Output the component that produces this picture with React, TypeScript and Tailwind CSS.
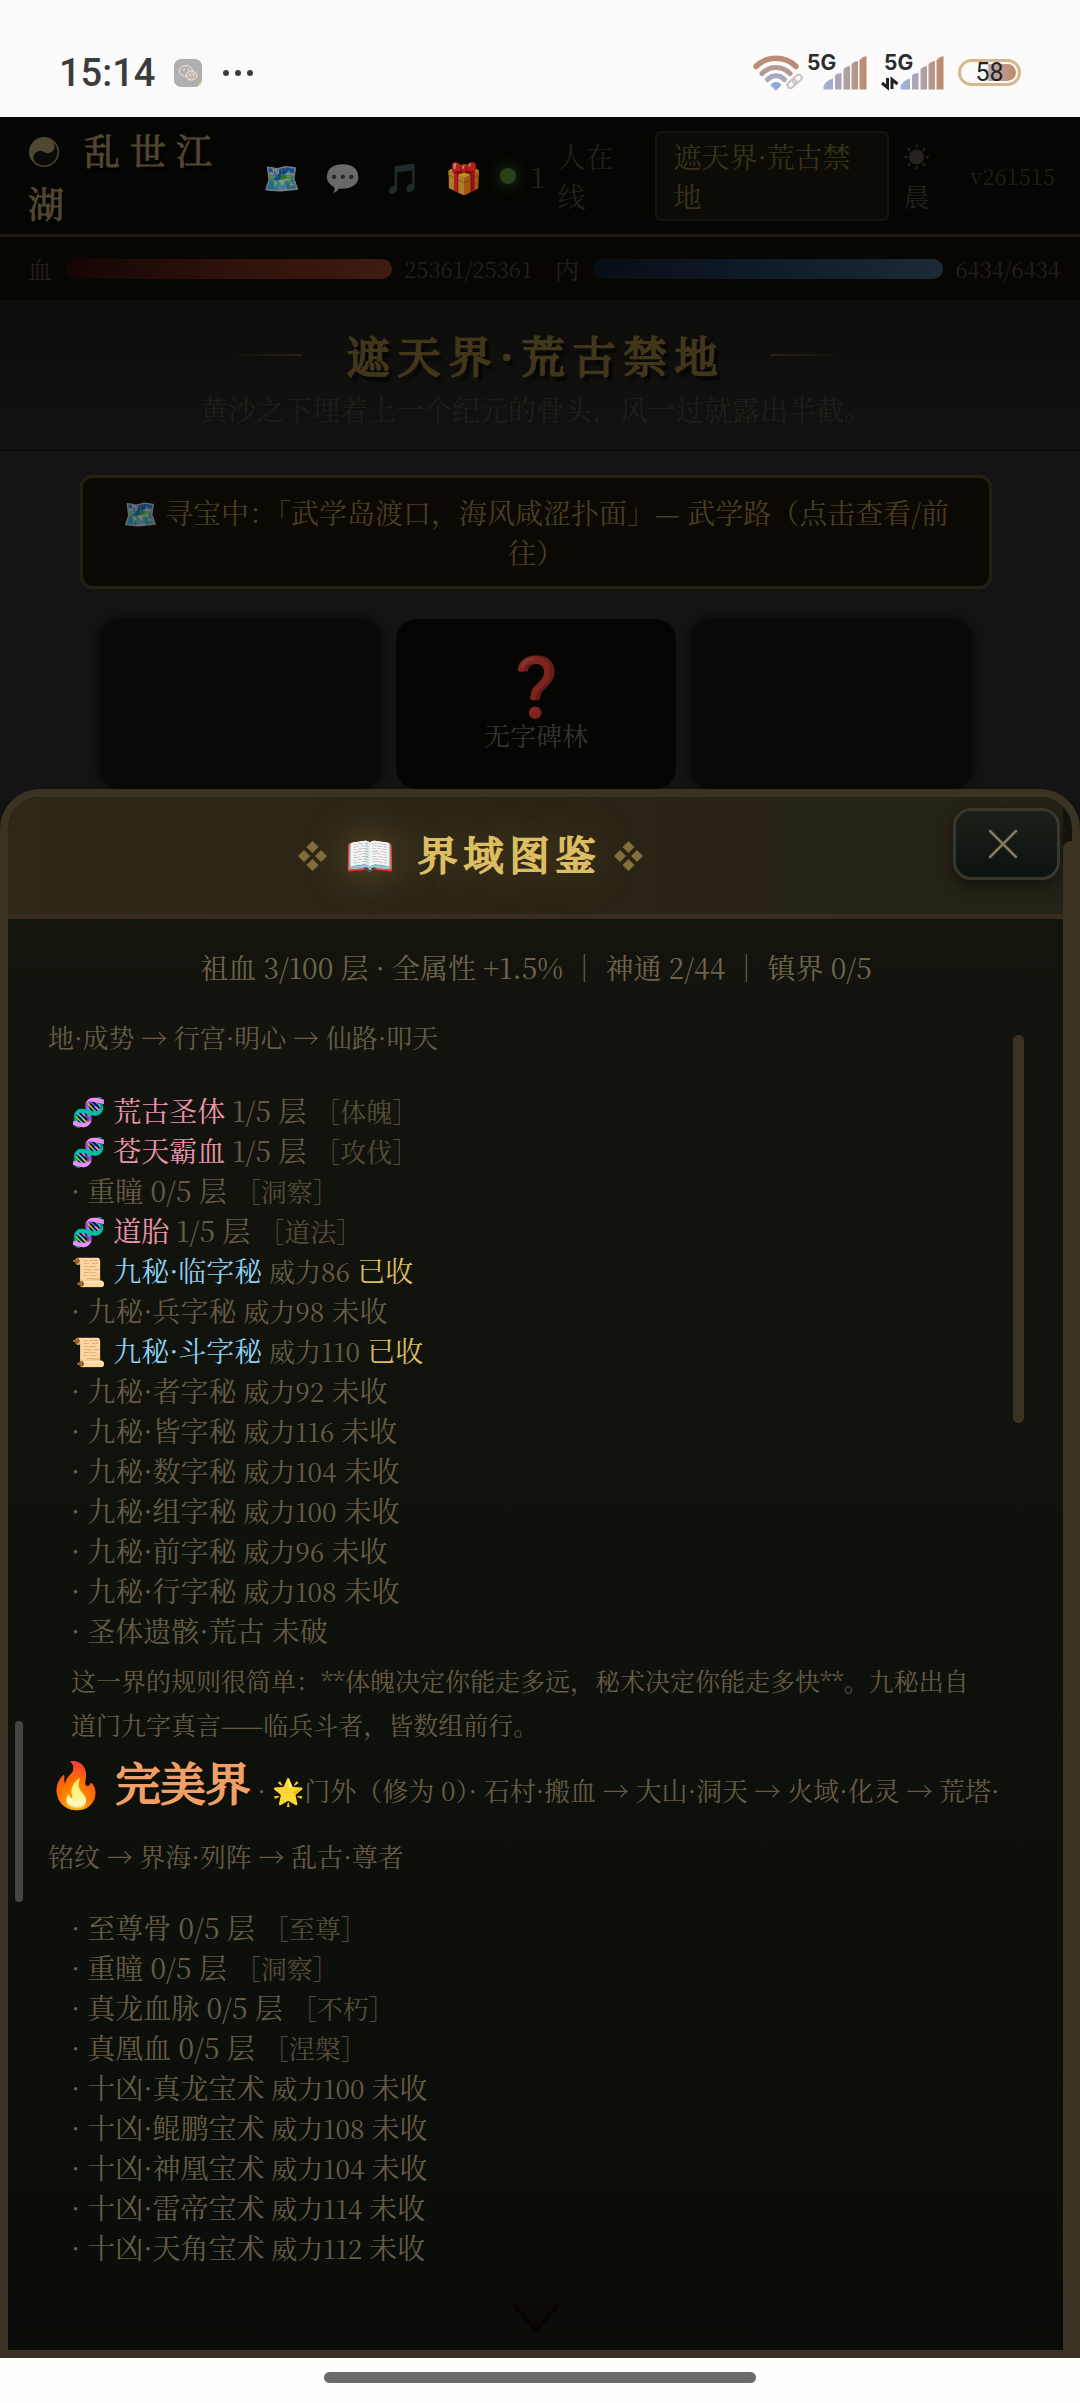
import React from "react";

type Row = {
  icon?: string;
  name: string;
  tone?: "pink" | "blue";
  count?: string;
  tag?: string;
  power?: string;
  state?: string;
  owned?: boolean;
};

const covering: Row[] = [
  { icon: "🧬", name: "荒古圣体", tone: "pink", count: "1/5 层", tag: "体魄" },
  { icon: "🧬", name: "苍天霸血", tone: "pink", count: "1/5 层", tag: "攻伐" },
  { name: "重瞳", count: "0/5 层", tag: "洞察" },
  { icon: "🧬", name: "道胎", tone: "pink", count: "1/5 层", tag: "道法" },
  { icon: "📜", name: "九秘·临字秘", tone: "blue", power: "威力86", state: "已收", owned: true },
  { name: "九秘·兵字秘", power: "威力98", state: "未收" },
  { icon: "📜", name: "九秘·斗字秘", tone: "blue", power: "威力110", state: "已收", owned: true },
  { name: "九秘·者字秘", power: "威力92", state: "未收" },
  { name: "九秘·皆字秘", power: "威力116", state: "未收" },
  { name: "九秘·数字秘", power: "威力104", state: "未收" },
  { name: "九秘·组字秘", power: "威力100", state: "未收" },
  { name: "九秘·前字秘", power: "威力96", state: "未收" },
  { name: "九秘·行字秘", power: "威力108", state: "未收" },
  { name: "圣体遗骸·荒古", state: "未破" },
];

const perfect: Row[] = [
  { name: "至尊骨", count: "0/5 层", tag: "至尊" },
  { name: "重瞳", count: "0/5 层", tag: "洞察" },
  { name: "真龙血脉", count: "0/5 层", tag: "不朽" },
  { name: "真凰血", count: "0/5 层", tag: "涅槃" },
  { name: "十凶·真龙宝术", power: "威力100", state: "未收" },
  { name: "十凶·鲲鹏宝术", power: "威力108", state: "未收" },
  { name: "十凶·神凰宝术", power: "威力104", state: "未收" },
  { name: "十凶·雷帝宝术", power: "威力114", state: "未收" },
  { name: "十凶·天角宝术", power: "威力112", state: "未收" },
];

function RowList({ rows }: { rows: Row[] }) {
  return (
    <ul className="pl-[23px] text-[28px] leading-10 whitespace-nowrap text-[#665c46]">
      {rows.map((r) => (
        <li key={r.name} className="h-10">
          {r.icon ?? "·"}{" "}
          <span
            className={
              r.tone === "pink" ? "text-[#ee95ae]" : r.tone === "blue" ? "text-[#8fd0f5]" : ""
            }
          >
            {r.name}
          </span>
          {r.count && " " + r.count}
          {r.tag && <span className="ml-2 text-[26px] text-[#554d39]">［{r.tag}］</span>}
          {r.power && <span className="text-[26px]"> {r.power}</span>}
          {r.state && <span className={r.owned ? "text-[#d9bd62]" : ""}> {r.state}</span>}
        </li>
      ))}
    </ul>
  );
}

function Wifi() {
  return (
    <svg width="52" height="36" viewBox="0 0 52 36" fill="none" strokeLinecap="round" aria-label="Wi-Fi">
      <path d="M3 11.5C14 .5 32 .5 43 11.5" stroke="#bd8c72" strokeWidth="5.5" />
      <path d="M9 18.5C17 10.500 29 10.500 37 18.500" stroke="#b59a94" strokeWidth="5" />
      <path d="M14.500 24.500C19.500 19.500 26.500 19.500 31.500 24.500" stroke="#a9acbd" strokeWidth="5" />
      <path d="M18 30C20 26.500 26 26.500 28 30L23 35Z" fill="#8fa9dc" stroke="#8fa9dc" strokeWidth="1" />
      <g stroke="#cfc0c0" strokeWidth="2" transform="rotate(-42 42 26)">
        <rect x="33" y="23" width="10" height="6" rx="3" />
        <rect x="40" y="23" width="10" height="6" rx="3" />
      </g>
    </svg>
  );
}

function Signal({ id, arrows }: { id: string; arrows?: boolean }) {
  return (
    <span className="relative block h-9 w-[62px]">
      <span className="absolute -top-1 left-0 font-[Inter,sans-serif] text-[21px] leading-6 font-bold text-[#2c2c2c]">
        5G
      </span>
      <svg className="absolute inset-0 overflow-visible" width="62" height="36" viewBox="0 0 62 36" aria-label="信号">
        <defs>
          <linearGradient id={id} gradientUnits="userSpaceOnUse" x1="16" x2="60" y1="0" y2="0">
            <stop offset="0" stopColor="#9db4e2" />
            <stop offset=".5" stopColor="#b0a0a4" />
            <stop offset="1" stopColor="#be8a6c" />
          </linearGradient>
        </defs>
        <path
          fill={`url(#${id})`}
          d="M16.500 34.500v-3q2-6 9.500-8v11z M28 34.500V20q3-2 6.500-2v16.500z M36.500 34.500V14q3-3 6.500-3v23.500z M44.500 34.500V9q3-3 6.500-3v28.500z M52.500 34.500V5q3-3.500 7-4v33.500z"
        />
        {arrows && (
          <path
            d="M3.500 23v9.500L-2 28M8 34v-9.500l5.500 4.500"
            fill="none"
            stroke="#222"
            strokeWidth="3"
          />
        )}
      </svg>
    </span>
  );
}

function StatusBar() {
  return (
    <header className="flex h-[117px] items-center bg-[#fbfbfb] px-[59px] pt-7 font-[Inter,sans-serif] text-[#3c3c3c]">
      <span className="font-[Roboto,sans-serif] text-[38px] leading-10 font-medium">15:14</span>
      <svg className="ml-[18px]" width="30" height="30" viewBox="0 0 30 30" aria-label="微信">
        <rect x="1" y="1" width="28" height="28" rx="7" fill="#afafaf" />
        <ellipse cx="13" cy="13" rx="6.500" ry="5.500" fill="#b9b2ac" stroke="#f0e6dd" />
        <ellipse cx="18.500" cy="17.500" rx="5.500" ry="4.500" fill="#c4bbb3" stroke="#f0e6dd" />
        <path d="M10.500 11.500h1M15 11.500h1M16.500 16.500h1M20 16.500h1" stroke="#fff" strokeWidth="1.500" />
        <path d="M25 28l4-5v2q0 3-4 3" fill="#f4ddb0" />
      </svg>
      <span className="ml-5 flex gap-1.5" aria-label="更多">
        <i className="size-1.5 rounded-full bg-[#3c3c3c]" />
        <i className="size-1.5 rounded-full bg-[#3c3c3c]" />
        <i className="size-1.5 rounded-full bg-[#3c3c3c]" />
      </span>
      <span className="ml-auto flex items-center">
        <Wifi />
        <span className="ml-0.5">
          <Signal id="sig-a" />
        </span>
        <span className="ml-[15px]">
          <Signal id="sig-b" arrows />
        </span>
        <span className="ml-3 flex h-[27px] w-[63px] items-center rounded-full border-[3px] border-[#d6b88c] p-[2px]">
          <span className="flex h-full w-full items-center justify-center rounded-full bg-linear-to-r from-transparent from-45% via-[#b8a6a8] via-50% to-[#c08a68] font-[Roboto,sans-serif] text-[25px] leading-none text-[#222]">
            58
          </span>
        </span>
      </span>
    </header>
  );
}

function Taiji() {
  return (
    <svg className="mr-6 inline-block align-[-3px]" width="32" height="32" viewBox="0 0 32 32" aria-hidden="true">
      <circle cx="16" cy="16" r="15" fill="#4f4730" />
      <path
        d="M16 2.500a13.500 13.500 0 0 1 0 27 6.750 6.750 0 0 1 0-13.500 6.750 6.750 0 0 0 0-13.500"
        fill="#0a0a08"
        transform="rotate(35 16 16)"
      />
    </svg>
  );
}

function Meter({ label, value, red }: { label: string; value: string; red?: boolean }) {
  return (
    <div className="flex flex-1 items-center text-[22px] text-[#23211c]">
      <span className="text-2xl">{label}</span>
      <span
        className={
          red
            ? "ml-[14px] h-5 flex-1 rounded-full bg-linear-to-r from-[#140604] via-[#30110c] to-[#3f1b12]"
            : "ml-[14px] h-5 flex-1 rounded-full bg-linear-to-r from-[#070d15] via-[#101c2a] to-[#1d2936]"
        }
      />
      <span className="ml-3">{value}</span>
    </div>
  );
}

function Game() {
  return (
    <div className="col-start-1 row-start-1 bg-[#131313]">
      <div className="flex h-[120px] items-center border-b-[3px] border-[#1b1713] bg-[#050503] pr-[25px] pl-7">
        <h1 className="w-[235px] text-[36px] leading-[53px] font-normal tracking-[10px] text-[#50472e] [-webkit-text-stroke:1px_#50472e] [text-shadow:3px_4px_3px_#000]">
          <Taiji />
          乱世江
          <br />湖
        </h1>
        <nav className="flex w-[219px] justify-between text-[30px] leading-10">
          <button className="opacity-60" aria-label="地图">🗺️</button>
          <button className="opacity-40" aria-label="聊天">💬</button>
          <button className="opacity-35" aria-label="音乐">🎵</button>
          <button className="opacity-70" aria-label="礼物">🎁</button>
        </nav>
        <span className="ml-[18px] size-4 rounded-full bg-[#29421b] shadow-[0_0_12px_4px_#12200b]" />
        <span className="ml-[14px] text-[28px] text-[#25231d]">1</span>
        <span className="ml-3 w-[72px] text-[28px] leading-10 text-[#22201b]">
          人在
          <br />线
        </span>
        <button className="ml-[26px] w-[234px] shrink-0 rounded-md border-2 border-[#15140c] bg-[#0d0b06] px-4 py-[3px] text-left text-[28px] leading-10 text-[#3b321a]">
          遮天界·荒古禁地
        </button>
        <span className="ml-[14px] w-7 text-[26px] leading-10 text-[#25231e]">☀ 晨</span>
        <span className="ml-auto text-[22px] text-[#201e1a]">v261515</span>
      </div>

      <div className="flex h-16 items-center gap-[22px] border-b border-[#0e0d09] bg-[#070603] pr-5 pl-7">
        <Meter label="血" value="25361/25361" red />
        <Meter label="内" value="6434/6434" />
      </div>

      <div className="flex h-[150px] flex-col items-center border-b-2 border-[#0a0a0a] bg-linear-to-b from-[#0d0c0a] to-[#121212] pt-[22px] pr-2">
        <div className="flex items-center gap-11">
          <i className="h-0.5 w-[74px] bg-linear-to-r from-transparent to-[#29230f]" />
          <h2 className="text-[43px] leading-[64px] font-normal tracking-[8px] text-[#41361a] [-webkit-text-stroke:2px_#41361a] [text-shadow:4px_5px_3px_#000]">
            遮天界·荒古禁地
          </h2>
          <i className="h-0.5 w-[74px] bg-linear-to-l from-transparent to-[#29230f]" />
        </div>
        <p className="text-[28px] leading-[44px] text-[#201e1a]">
          黄沙之下埋着上一个纪元的骨头，风一过就露出半截。
        </p>
      </div>

      <div className="pr-2">
        <button className="mx-auto mt-6 block w-[85%] rounded-xl border-[3px] border-[#262010] bg-[#0c0803] px-6 py-[14px] text-[28px] leading-10 text-[#4a3e22]">
          <span className="opacity-50">🗺️</span> 寻宝中：「武学岛渡口，海风咸涩扑面」— 武学路（点击查看/前
          <br />
          往）
        </button>

        <div className="mx-[100px] mt-[30px] grid grid-cols-3 gap-[15px]">
          <div className="h-[170px] rounded-[20px] bg-[#090909] shadow-[0_0_6px_2px_#0c0c0c]" />
          <button className="flex h-[170px] flex-col items-center rounded-[20px] bg-[#050504] pt-[29px] text-[#38352d]">
            <span className="text-[58px] leading-[68px] opacity-50">❓</span>
            <span className="text-[26px] leading-[38px]">无字碑林</span>
          </button>
          <div className="h-[170px] rounded-[20px] bg-[#090909] shadow-[0_0_6px_2px_#0c0c0c]" />
        </div>
      </div>
    </div>
  );
}

function Knot() {
  return (
    <svg width="29" height="30" viewBox="0 0 29 30" fill="#81703a" aria-hidden="true">
      <path d="M14.500 0l6 6-6 6-6-6zM14.500 18l6 6-6 6-6-6zM6 9l6 6-6 6-6-6zM23 9l6 6-6 6-6-6z" />
    </svg>
  );
}

function Codex() {
  return (
    <section
      role="dialog"
      aria-label="界域图鉴"
      className="relative z-10 col-start-1 row-start-1 mt-[672px] overflow-hidden rounded-t-[40px] border-8 border-[#3a3323] bg-linear-to-b from-[#14140d] via-[#0f120b] to-[#0a0c09]"
    >
      <div className="mr-[9px] flex h-[122px] items-center justify-center border-b-[5px] border-[#382c20] bg-linear-to-r from-[#2f281a] via-[#2b2417] to-[#252217] pr-[130px]">
        <h2 className="flex items-center text-[40px] leading-[60px] font-normal tracking-[6px] text-[#dcbd62] [-webkit-text-stroke:2px_#dcbd62] [text-shadow:0_0_40px_#6a5c26]">
          <Knot />
          <span className="mr-3 ml-[18px] pb-[5px]">📖 界域图鉴</span>
          <Knot />
        </h2>
        <button
          aria-label="关闭"
          className="absolute top-[11px] right-3 flex h-[72px] w-[107px] items-center justify-center rounded-[18px] border-[3px] border-[#39362a] bg-linear-to-b from-[#1b1f1a] to-[#0c1310] pr-2 shadow-[0_6px_16px_#15130c]"
        >
          <svg width="30" height="30" viewBox="0 0 30 30" stroke="#82795f" strokeWidth="2.500" strokeLinecap="round">
            <path d="M2 2l26 26M28 2L2 28" />
          </svg>
        </button>
      </div>
      <div className="absolute top-11 right-0 bottom-0 w-[9px] rounded-tl-lg bg-[#3a3323]" />
      <div className="absolute top-[924px] left-[7px] h-[181px] w-2 rounded-full bg-[#454643]" />
      <div className="absolute top-[238px] right-12 h-[388px] w-[11px] rounded-full bg-[#3a3323]" />

      <p className="pt-7 pr-2 text-center text-[28px] leading-10 text-[#6f644d]">
        祖血 3/100 层 · 全属性 +1.5% ｜ 神通 2/44 ｜ 镇界 0/5
      </p>
      <div className="mt-[14px] pr-16 pl-10 text-[#665c46]">
        <p className="text-[26px] leading-[72px]">地·成势 → 行宫·明心 → 仙路·叩天</p>
        <div className="mt-[17px]">
          <RowList rows={covering} />
        </div>
        <p className="mt-2 pl-[23px] text-[25px] leading-[44px] whitespace-nowrap">
          这一界的规则很简单：**体魄决定你能走多远，秘术决定你能走多快**。九秘出自
          <br />
          道门九字真言——临兵斗者，皆数组前行。
        </p>
        <div className="mt-[3px] text-[26px] leading-[66px] whitespace-nowrap">
          <h3 className="inline text-[45px] font-normal text-[#f0a066] [-webkit-text-stroke:2px_#f0a066]">
            🔥 完美界
          </h3>{" "}
          · 🌟门外（修为 0）· 石村·搬血 → 大山·洞天 → 火域·化灵 → 荒塔·
          <br />
          铭纹 → 界海·列阵 → 乱古·尊者
        </div>
        <div className="mt-[18px]">
          <RowList rows={perfect} />
        </div>
      </div>
      <div className="flex h-[83px] items-end justify-center pr-2 pb-[14px]">
        <svg width="50" height="36" viewBox="0 0 50 36" aria-hidden="true">
          <path d="M1 3h48L25 34z" fill="#0c0905" />
          <path d="M2 4l23 27L48 4" fill="none" stroke="#060503" strokeWidth="4" />
        </svg>
      </div>
    </section>
  );
}

export default function App() {
  return (
    <div className="min-h-screen bg-[#fefefe] font-['Noto_Serif_CJK_SC','Liberation_Serif','Noto_Sans_CJK_SC',serif]">
      <StatusBar />
      <main className="grid">
        <Game />
        <Codex />
      </main>
      <footer className="flex h-[45px] justify-center pt-[14px]">
        <div className="h-[11px] w-2/5 rounded-full bg-[#6b6b6b]" />
      </footer>
    </div>
  );
}
